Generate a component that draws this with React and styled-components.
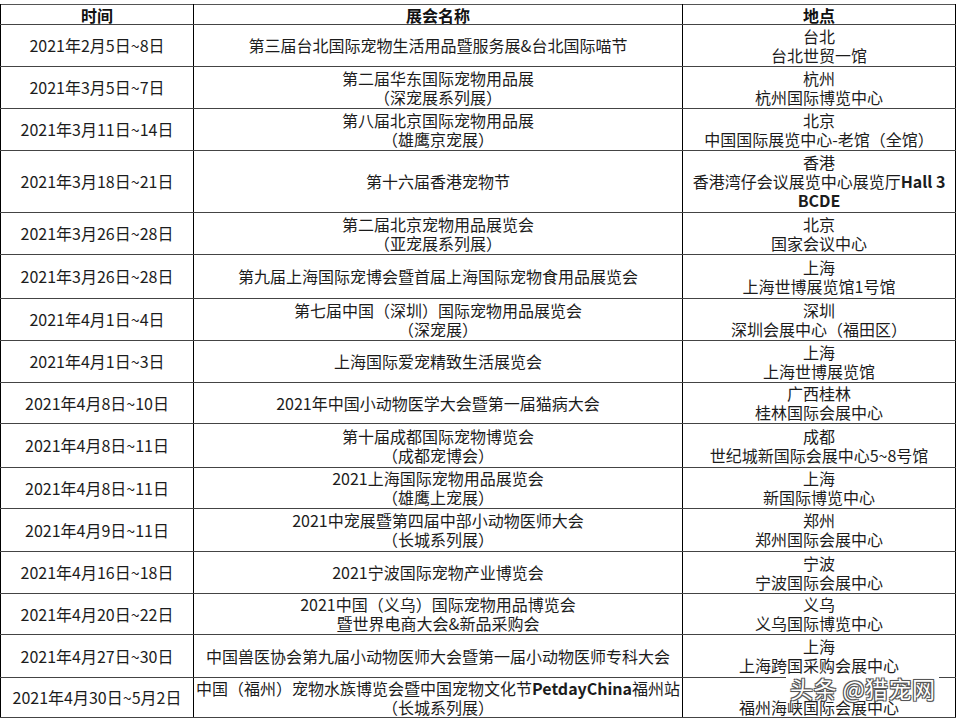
import React from "react";
import styled, { createGlobalStyle } from "styled-components";

const Global = createGlobalStyle`
  html, body { margin: 0; padding: 0; background: #fff; }
  body { font-family: "Noto Sans CJK SC", "Noto Sans", sans-serif; color: #1a1a1a; }
`;

const Page = styled.div`
  position: relative;
  width: 960px;
  height: 720px;
  padding-top: 4px;
  box-sizing: border-box;
  overflow: hidden;
`;

const Table = styled.table`
  border-collapse: collapse;
  table-layout: fixed;
  width: 956px;
  border-top: 1px solid #555;
  border-left: 1px solid #000;
  border-right: 1px solid #000;
`;

const Row = styled.tr`
  height: ${(p) => p.$h}px;
`;

const Cell = styled.td`
  padding: 0 2px;
  text-align: center;
  vertical-align: middle;
  font-size: 16px;
  line-height: 19px;
  white-space: nowrap;
  border-bottom: 1px solid #444;
  border-left: 1px solid #000;
  border-right: 1px solid #000;
  color: #1c1c1c;
  overflow: visible;
`;

const Head = styled(Cell).attrs({ as: "th" })`
  font-weight: 700;
  line-height: 18px;
  color: #111;
`;

const Latin = styled.span`
  font-weight: 600;
`;

const Line = styled.div``;

const Watermark = styled.div`
  position: absolute;
  left: 786px;
  top: 677px;
  padding: 0 4px;
  background: #fff;
  font-size: 23px;
  line-height: 23px;
  color: #fff;
  letter-spacing: 0.5px;
  text-shadow: -1px -1px 0 #555, 1px -1px 0 #555, -1px 1px 0 #555, 1px 1px 0 #555,
    0 0 2px #333;
`;

const rows = [
  { h: 42, d: "2021年2月5日~8日", n: ["第三届台北国际宠物生活用品暨服务展&台北国际喵节"], l: ["台北", "台北世贸一馆"] },
  { h: 42, d: "2021年3月5日~7日", n: ["第二届华东国际宠物用品展", "（深宠展系列展）"], l: ["杭州", "杭州国际博览中心"] },
  { h: 42, d: "2021年3月11日~14日", n: ["第八届北京国际宠物用品展", "（雄鹰京宠展）"], l: ["北京", "中国国际展览中心-老馆（全馆）"] },
  { h: 62, d: "2021年3月18日~21日", n: ["第十六届香港宠物节"], l: ["香港", <>香港湾仔会议展览中心展览厅<Latin>Hall 3</Latin></>, <Latin>BCDE</Latin>] },
  { h: 42, d: "2021年3月26日~28日", n: ["第二届北京宠物用品展览会", "（亚宠展系列展）"], l: ["北京", "国家会议中心"] },
  { h: 44, d: "2021年3月26日~28日", n: ["第九届上海国际宠博会暨首届上海国际宠物食用品展览会"], l: ["上海", "上海世博展览馆1号馆"] },
  { h: 42, d: "2021年4月1日~4日", n: ["第七届中国（深圳）国际宠物用品展览会", "（深宠展）"], l: ["深圳", "深圳会展中心（福田区）"] },
  { h: 42, d: "2021年4月1日~3日", n: ["上海国际爱宠精致生活展览会"], l: ["上海", "上海世博展览馆"] },
  { h: 41, d: "2021年4月8日~10日", n: ["2021年中国小动物医学大会暨第一届猫病大会"], l: ["广西桂林", "桂林国际会展中心"] },
  { h: 44, d: "2021年4月8日~11日", n: ["第十届成都国际宠物博览会", "（成都宠博会）"], l: ["成都", "世纪城新国际会展中心5~8号馆"] },
  { h: 41, d: "2021年4月8日~11日", n: ["2021上海国际宠物用品展览会", "（雄鹰上宠展）"], l: ["上海", "新国际博览中心"] },
  { h: 43, d: "2021年4月9日~11日", n: ["2021中宠展暨第四届中部小动物医师大会", "（长城系列展）"], l: ["郑州", "郑州国际会展中心"] },
  { h: 42, d: "2021年4月16日~18日", n: ["2021宁波国际宠物产业博览会"], l: ["宁波", "宁波国际会展中心"] },
  { h: 41, d: "2021年4月20日~22日", n: ["2021中国（义乌）国际宠物用品博览会", "暨世界电商大会&新品采购会"], l: ["义乌", "义乌国际博览中心"] },
  { h: 43, d: "2021年4月27日~30日", n: ["中国兽医协会第九届小动物医师大会暨第一届小动物医师专科大会"], l: ["上海", "上海跨国采购会展中心"] },
  { h: 40, d: "2021年4月30日~5月2日", n: [<>中国（福州）宠物水族博览会暨中国宠物文化节<Latin>PetdayChina</Latin>福州站</>, "（长城系列展）"], l: ["福州", "福州海峡国际会展中心"] },
];

export default function App() {
  return (
    <Page>
      <Global />
      <Table>
        <colgroup>
          <col style={{ width: 193 }} />
          <col style={{ width: 489 }} />
          <col style={{ width: 273 }} />
        </colgroup>
        <thead>
          <Row $h={20}>
            <Head>时间</Head>
            <Head>展会名称</Head>
            <Head>地点</Head>
          </Row>
        </thead>
        <tbody>
          {rows.map((r, i) => (
            <Row key={i} $h={r.h}>
              <Cell>{r.d}</Cell>
              <Cell>
                {r.n.map((t, j) => (
                  <Line key={j}>{t}</Line>
                ))}
              </Cell>
              <Cell>
                {r.l.map((t, j) => (
                  <Line key={j}>{t}</Line>
                ))}
              </Cell>
            </Row>
          ))}
        </tbody>
      </Table>
      <Watermark>头条 @猎宠网</Watermark>
    </Page>
  );
}
